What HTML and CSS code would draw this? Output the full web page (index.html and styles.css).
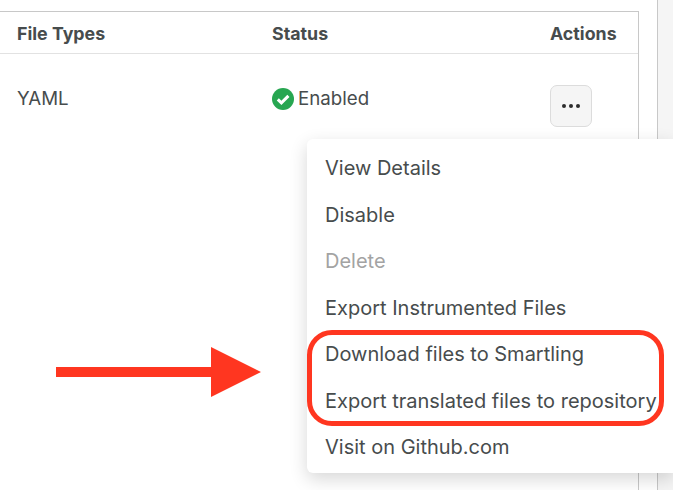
FILE: index.html
```html
<!DOCTYPE html>
<html>

<head>
    <title>File Types</title>
    <link rel="stylesheet" href="styles.css">
</head>

<body>
    <section class="page">
        <div class="table-box">
            <div class="row head">
                <div>File Types</div>
                <div>Status</div>
                <div>Actions</div>
            </div>
            <div class="row body">
                <div>YAML</div>
                <div class="status">
                    <svg class="check" viewBox="0 0 22 22" width="22" height="22">
                        <circle cx="11" cy="11" r="11" fill="#27a651" />
                        <path d="M5.8 11.4l3.6 3.5 7-7" fill="none" stroke="#fff" stroke-width="3" />
                    </svg>
                    Enabled
                </div>
                <div>
                    <button class="more">
                        <svg viewBox="0 0 18 4" width="18" height="4">
                            <circle cx="2" cy="2" r="2" />
                            <circle cx="9" cy="2" r="2" />
                            <circle cx="16" cy="2" r="2" />
                        </svg>
                    </button>
                </div>
            </div>
        </div>
        <div class="side"></div>
    </section>

    <ul class="menu">
        <li>View Details</li>
        <li>Disable</li>
        <li class="disabled">Delete</li>
        <li>Export Instrumented Files</li>
        <li>Download files to Smartling</li>
        <li>Export translated files to repository</li>
        <li>Visit on Github.com</li>
    </ul>

    <div class="ring"></div>
    <svg class="arrow" viewBox="0 0 206 50" width="206" height="50">
        <path d="M0 20h155V0l50 25-50 25V30H0z" fill="#ff3620" />
    </svg>
</body>

</html>
```

FILE: styles.css
```css
* {
    box-sizing: border-box;
}

html,
body {
    height: 100%;
}

body {
    margin: 0;
    overflow: hidden;
    background: #FFF;
    color: #474c4d;
    font-family: Inter, Arial, sans-serif;
    font-size: 20px;
}

.page {
    display: flex;
    height: 100%;
    padding-top: 11px;
}

.table-box {
    width: 639px;
    border-top: 1px solid #c8c8c8;
    border-right: 1px solid #c8c8c8;
}

.side {
    flex: 1;
    margin-left: 18px;
    margin-top: -11px;
    border-left: 1px solid #c8c8c8;
    background: #f5f5f5;
}

.row {
    display: grid;
    grid-template-columns: 255px 278px 1fr;
    padding-left: 17px;
}

.head {
    height: 42px;
    padding-top: 1px;
    align-items: center;
    border-bottom: 1px solid #e2e2e2;
    font-size: 17.8px;
    font-weight: 700;
}

.body {
    padding-top: 31px;
    font-size: 18.7px;
    line-height: 28px;
}

.status {
    display: flex;
    align-items: flex-start;
    gap: 4px;
}

.check {
    margin-top: 3px;
}

.more {
    display: flex;
    align-items: center;
    justify-content: center;
    width: 42px;
    height: 42px;
    padding: 0;
    border: 1px solid #dcdcdc;
    border-radius: 7px;
    background: #f5f5f5;
}

.more svg {
    fill: #2c2c2c;
}

.menu {
    position: absolute;
    left: 307px;
    top: 139px;
    width: 366px;
    height: 334px;
    margin: 0;
    padding: 6px 0 0 18px;
    list-style: none;
    background: #FFF;
    border-radius: 6px 0 0 6px;
    box-shadow: 0 6px 18px rgb(0 0 0 / 16%);
}

.menu li {
    height: 46.5px;
    line-height: 46.5px;
    white-space: nowrap;
}

.menu .disabled {
    color: #a3a3a3;
}

.ring {
    position: absolute;
    left: 307px;
    top: 330px;
    width: 357px;
    height: 96px;
    border: 5px solid #ff3620;
    border-radius: 25px;
}

.arrow {
    position: absolute;
    left: 56px;
    top: 347px;
}
```
